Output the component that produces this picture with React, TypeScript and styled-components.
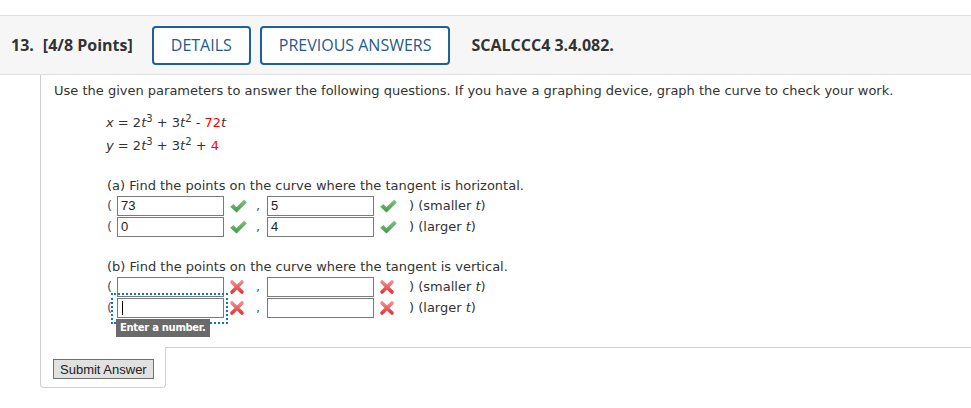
import React from 'react';
import styled, { createGlobalStyle } from 'styled-components';

const GlobalStyle = createGlobalStyle`
    body {
        margin: 0;
        background: #fff;
        font-family: 'Open Sans', 'DejaVu Sans', sans-serif;
    }
`

type Status = 'correct' | 'wrong'

type RowType = {
    x: string
    y: string
    status: Status
    label: string
    focused?: boolean
}

const partA: Array<RowType> = [
    { x: '73', y: '5', status: 'correct', label: 'smaller' },
    { x: '0', y: '4', status: 'correct', label: 'larger' },
]

const partB: Array<RowType> = [
    { x: '', y: '', status: 'wrong', label: 'smaller' },
    { x: '', y: '', status: 'wrong', label: 'larger', focused: true },
]

const CheckIcon = () => (
    <svg width="19" height="16" viewBox="0 0 19 16">
        <defs>
            <linearGradient id="chk" x1="0" y1="0" x2="0" y2="1">
                <stop offset="0" stopColor="#82c880" />
                <stop offset="1" stopColor="#3d9846" />
            </linearGradient>
        </defs>
        <path d="M1.2 8.8 L4.5 6 L7.4 9.3 L15.2 1.6 L17.8 4.4 L7.5 14.4 Z" fill="url(#chk)" />
    </svg>
)

const CrossIcon = () => (
    <svg width="16" height="16" viewBox="0 0 16 16">
        <defs>
            <linearGradient id="crs" x1="0" y1="0" x2="0" y2="1">
                <stop offset="0" stopColor="#f58a8a" />
                <stop offset="1" stopColor="#e23b3b" />
            </linearGradient>
        </defs>
        <path d="M3 3 L13 13 M13 3 L3 13" stroke="url(#crs)" strokeWidth="3.6" strokeLinecap="round" />
    </svg>
)

const AnswerRow: React.FC<{ row: RowType }> = ({ row }) => {
    const Icon = row.status === 'correct' ? CheckIcon : CrossIcon
    return (
        <Row>
            <Paren>(</Paren>
            <Field>
                <Input defaultValue={ row.x } readOnly />
                { row.focused && <Caret /> }
                { row.focused && <FocusRing /> }
                { row.focused && <Tooltip>Enter a number.</Tooltip> }
            </Field>
            <IconBox><Icon /></IconBox>
            <Comma>,</Comma>
            <Field>
                <Input defaultValue={ row.y } readOnly />
            </Field>
            <IconBox><Icon /></IconBox>
            <Label>) ({ row.label } <i>t</i>)</Label>
        </Row>
    )
}

const App: React.FC = () => {
    return (
        <>
            <GlobalStyle />
            <Page>
                <Header>
                    <Number>13.</Number>
                    <Points>[4/8 Points]</Points>
                    <HeaderButton>DETAILS</HeaderButton>
                    <HeaderButton>PREVIOUS ANSWERS</HeaderButton>
                    <Source>SCALCCC4 3.4.082.</Source>
                </Header>
                <Body>
                    <Panel>
                        <Prompt>
                            Use the given parameters to answer the following questions. If you have a graphing device, graph the curve to check your work.
                        </Prompt>
                        <Equations>
                            <Eq>
                                <i>x</i> = 2<i>t</i><sup>3</sup> + 3<i>t</i><sup>2</sup> - <Red>72</Red><i>t</i>
                            </Eq>
                            <Eq>
                                <i>y</i> = 2<i>t</i><sup>3</sup> + 3<i>t</i><sup>2</sup> + <Red>4</Red>
                            </Eq>
                        </Equations>
                        <Part>
                            <PartTitle>(a) Find the points on the curve where the tangent is horizontal.</PartTitle>
                            { partA.map((r, i) => <AnswerRow key={ i } row={ r } />) }
                        </Part>
                        <Part>
                            <PartTitle>(b) Find the points on the curve where the tangent is vertical.</PartTitle>
                            { partB.map((r, i) => <AnswerRow key={ i } row={ r } />) }
                        </Part>
                    </Panel>
                    <Footer>
                        <SubmitTab>
                            <SubmitButton>Submit Answer</SubmitButton>
                        </SubmitTab>
                        <FooterLine />
                    </Footer>
                </Body>
            </Page>
        </>
    )
}

export default App;


const Page = styled.div `
    padding-top: 15px;
`

const Header = styled.div `
    display: flex;
    align-items: center;
    height: 58px;
    padding-left: 11px;
    background: #f6f6f6;
    border-top: 1px solid #dedede;
    border-bottom: 1px solid #dedede;
    color: #333;
    font-size: 16px;
`

const Number = styled.span `
    font-weight: 700;
    margin-right: 9px;
`

const Points = styled.span `
    font-weight: 700;
    margin-right: 19px;
`

const HeaderButton = styled.button `
    height: 39px;
    padding: 0 17px;
    margin-right: 9px;
    border: 2px solid #1d6198;
    border-radius: 4px;
    background: #fff;
    color: #1f5a8b;
    font-family: 'Open Sans', sans-serif;
    font-size: 16px;
`

const Source = styled.span `
    font-weight: 700;
    margin-left: 12px;
`

const Body = styled.div `
    margin-left: 40px;
`

const Panel = styled.div `
    border-left: 1px solid #cfcfcf;
    height: 272px;
    padding: 8px 0 0 13px;
    box-sizing: border-box;
    font-family: 'DejaVu Sans', Verdana, sans-serif;
    font-size: 13px;
    color: #333;
`

const Prompt = styled.div `
    line-height: 16px;
`

const Equations = styled.div `
    padding: 12px 0 0 52px;
`

const Eq = styled.div `
    line-height: 23px;

    sup {
        font-size: 10px;
        vertical-align: 5px;
        line-height: 0;
    }
`

const Red = styled.span `
    color: #f00;
`

const Part = styled.div `
    padding-left: 53px;
    margin-top: 21px;

    & + & {
        margin-top: 22px;
    }
`

const PartTitle = styled.div `
    line-height: 16px;
    margin-bottom: 1px;
`

const Row = styled.div `
    display: flex;
    align-items: center;
    height: 21px;
`

const Paren = styled.span `
    width: 10px;
    color: #555;
`

const Field = styled.span `
    position: relative;
    display: inline-flex;
`

const Input = styled.input `
    width: 107px;
    height: 20px;
    box-sizing: border-box;
    border: 1px solid #7a7a7a;
    padding: 0 3px;
    font-family: 'Liberation Sans', Arial, sans-serif;
    font-size: 13px;
    color: #222;
    outline: none;
`

const Caret = styled.span `
    position: absolute;
    left: 5px;
    top: 3px;
    width: 1px;
    height: 14px;
    background: #000;
`

const FocusRing = styled.span `
    position: absolute;
    left: -6px;
    top: -5px;
    width: 113px;
    height: 27px;
    border: 2px dotted #0b74d4;
    pointer-events: none;
`

const Tooltip = styled.span `
    position: absolute;
    left: -1px;
    top: 21px;
    padding: 3px 4px;
    background: #6a6a6a;
    color: #fff;
    font-size: 10px;
    font-weight: 700;
    letter-spacing: -0.3px;
    white-space: nowrap;
    line-height: 12px;
`

const IconBox = styled.span `
    display: inline-flex;
    width: 20px;
    margin-left: 5px;
`

const Comma = styled.span `
    width: 18px;
    text-align: center;
    color: #555;
`

const Label = styled.span `
    margin-left: 10px;
`

const Footer = styled.div `
    display: flex;
    align-items: flex-start;
`

const SubmitTab = styled.div `
    width: 126px;
    padding: 12px 0 8px 12px;
    box-sizing: border-box;
    border-left: 1px solid #cfcfcf;
    border-right: 1px solid #cfcfcf;
    border-bottom: 1px solid #cfcfcf;
    border-radius: 0 0 4px 4px;
`

const SubmitButton = styled.button `
    display: block;
    height: 20px;
    padding: 0 6px;
    border: 1px solid #707070;
    background: #e1e1e1;
    font-family: 'Liberation Sans', Arial, sans-serif;
    font-size: 13px;
    color: #222;
    border-radius: 0;
`

const FooterLine = styled.div `
    flex: 1;
    border-top: 1px solid #cfcfcf;
`
